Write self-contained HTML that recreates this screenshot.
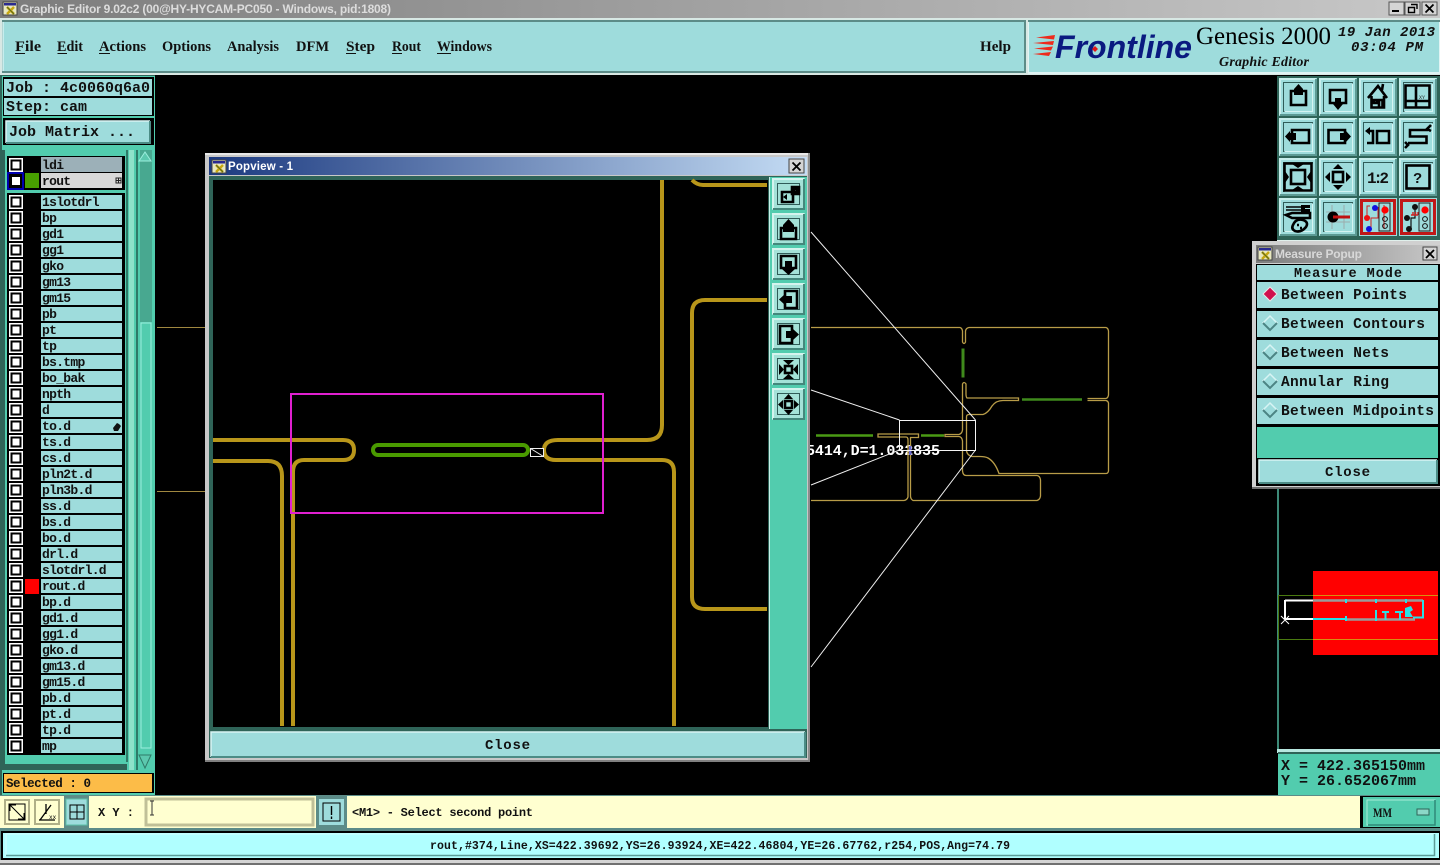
<!DOCTYPE html>
<html><head><meta charset="utf-8"><title>Graphic Editor</title>
<style>
html,body{margin:0;padding:0;background:#000;width:1440px;height:865px;overflow:hidden}
svg{display:block;position:absolute;left:0;top:0}
text{white-space:pre}
.m{font-family:"Liberation Mono",monospace;font-weight:bold;fill:#111}
.s{font-family:"Liberation Serif",serif;font-weight:bold;fill:#111}
.l{font-family:"Liberation Mono",monospace;font-weight:bold;font-size:13px;letter-spacing:-.7px;fill:#111}
.ic{fill:none;stroke:#000;stroke-width:2.6}
.k{fill:#000}
.o{fill:none;stroke:#b89c48;stroke-width:1.3}
.y{fill:none;stroke:#b8961a;stroke-width:4}
</style></head><body>
<svg width="1440" height="865" viewBox="0 0 1440 865" xmlns="http://www.w3.org/2000/svg">
<defs>
<linearGradient id="tg" x1="0" x2="1" y1="0" y2="0"><stop offset="0" stop-color="#7c7c7c"/><stop offset="1" stop-color="#c8c8c8"/></linearGradient>
<linearGradient id="bg" x1="0" x2="1" y1="0" y2="0"><stop offset="0" stop-color="#1c3a80"/><stop offset="1" stop-color="#c4dcf4"/></linearGradient>
<g id="cb"><rect x="9" y="1" width="14" height="14" fill="#fff"/><rect x="11.5" y="3.5" width="9" height="9" fill="none" stroke="#000" stroke-width="2"/></g>
<g id="r"><rect x="41" y="1" width="81" height="14" fill="#9edcdc"/><use href="#cb"/></g>
<g id="b">
<rect width="38" height="38" fill="#9edcdc"/>
<path d="M1 37V1H37" fill="none" stroke="#c8eeec" stroke-width="2"/>
<path d="M37 1V37H1" fill="none" stroke="#5c9a94" stroke-width="2"/>
<rect x="4.5" y="4.500" width="29" height="29" fill="none" stroke="#2f5c58" stroke-width="1"/>
<path d="M5.500 33.500H33.500V5.500" fill="none" stroke="#d4f4f2" stroke-width="1"/>
</g>
<g id="p">
<rect width="33" height="32" fill="#a4e2d8"/>
<path d="M1 31V1H32" fill="none" stroke="#d4f4ee" stroke-width="2"/>
<path d="M32 1V31H1" fill="none" stroke="#44887c" stroke-width="2"/>
<rect x="5.500" y="5.500" width="22" height="21" fill="none" stroke="#2f5c58" stroke-width="1"/>
</g>
<g id="opt">
<rect x="1257" y="0" width="181" height="26" fill="#9edcdc"/>
<rect x="1257" y="26" width="181" height="3" fill="#000"/>
</g>
<g id="dia"><path d="M0 -7L7 0L0 7L-7 0Z" fill="#9edcdc" stroke="#d8f4f4" stroke-width="1.5"/><path d="M-7 0L0 7L7 0" fill="none" stroke="#4c8484" stroke-width="2"/></g>
<g id="wi"><rect x="0" y="0" width="14" height="13" fill="#e8e8c0" stroke="#444" stroke-width="1"/><rect x="1" y="1" width="12" height="2.500" fill="#2a2a90"/><path d="M4 5L11 12M11 5L4 12" stroke="#c8a810" stroke-width="2.400"/><path d="M4 5L11 12" stroke="#5a6a20" stroke-width="1"/></g>
</defs>

<rect width="1440" height="865" fill="#000"/>

<!-- main canvas drawing -->
<path d="M157 327.500H205M157 491.500H205" stroke="#a08840" fill="none"/>
<text class="m" x="806" y="455" font-size="15" textLength="134" style="fill:#fff">5414,D=1.032835</text>
<path class="o" d="M811 327.500H960Q962 328 962.500 331V342Q964 345 965.500 342V331Q966 328 969 327.500H1106Q1108 328 1108.500 331V395Q1108 398 1106 398.500H1087.500M1087.500 400.500H1106Q1108 401 1108.500 403V471Q1108 473.500 1106 473.500H999Q995 462 988 458Q985 456.500 980 456.500H972Q966.500 455 966.500 450V417Q966.500 414.500 969 414.500H983Q988 413 992 406Q996 400.500 1003 400.500H1018.500V398H967Q966 397 966 394V384Q964 381 962.500 384V430Q962 433.500 959 434.500H945V436.500H959Q962 437 962.500 441V471Q963 475.500 966 475.500H1037Q1040 476 1040.500 480V496Q1040 499.500 1037 500.500H913Q910.500 499 910.500 496V437.500H918.500V434H878V437H906Q908 437 908 440V497Q907 500 904 500.500H811"/>
<rect x="909" y="446" width="2.500" height="9" fill="#6464c8"/>
<path d="M963 348.500V377.500" stroke="#3f8a1c" stroke-width="3" fill="none"/>
<path d="M1022 399.500H1082" stroke="#3f8a1c" stroke-width="2.400" fill="none"/>
<path d="M816 435.500H873M921 435.500H944" stroke="#4a9a14" stroke-width="2.400" fill="none"/>
<path d="M811 232L975.500 420M811 390L899.500 420M811 485L899.500 450M811 667L975.500 450" stroke="#f0f0f0" stroke-width="1" fill="none"/>
<rect x="899.500" y="420.500" width="76" height="30" fill="none" stroke="#f4f4f4" stroke-width="1"/>

<!-- title bar -->
<rect x="0" y="0" width="1440" height="18" fill="url(#tg)"/>
<use href="#wi" x="3" y="2"/>
<text x="20" y="13" font-family="Liberation Sans" font-weight="bold" font-size="12" fill="#dcdcdc" textLength="371">Graphic Editor 9.02c2 (00@HY-HYCAM-PC050 - Windows, pid:1808)</text>
<rect x="1389" y="2" width="15" height="13" fill="#d4d4d4" stroke="#555"/><rect x="1392" y="10" width="7" height="2" fill="#000"/>
<rect x="1405" y="2" width="15" height="13" fill="#d4d4d4" stroke="#555"/><path d="M1411 4.500H1417V9M1408.500 7.500H1414.500V12.500H1408.500Z" fill="none" stroke="#000" stroke-width="1.400"/>
<rect x="1422" y="2" width="15" height="13" fill="#d4d4d4" stroke="#555"/><path d="M1425.500 4.500L1433.500 12.500M1433.500 4.500L1425.500 12.500" stroke="#000" stroke-width="1.800"/>

<!-- menu -->
<rect x="0" y="18" width="1440" height="57" fill="#d8e8e4"/>
<rect x="2" y="20" width="1024" height="53" fill="#5c8c88"/>
<rect x="3" y="22" width="1021" height="49" fill="#9edcdc"/>
<path d="M3 22V71" stroke="#d8f4f4" stroke-width="1.400"/>
<rect x="1028" y="20" width="412" height="54" fill="#e0f4f4"/>
<rect x="1028" y="20" width="412" height="2" fill="#5c8c88"/>
<rect x="1029" y="22" width="410" height="50" fill="#9edcdc"/>
<g>
<text class="s" font-size="15" lengthAdjust="spacingAndGlyphs" x="15" y="51" textLength="26">File</text>
<text class="s" font-size="15" lengthAdjust="spacingAndGlyphs" x="57" y="51" textLength="26">Edit</text>
<text class="s" font-size="15" lengthAdjust="spacingAndGlyphs" x="99" y="51" textLength="47">Actions</text>
<text class="s" font-size="15" lengthAdjust="spacingAndGlyphs" x="162" y="51" textLength="49">Options</text>
<text class="s" font-size="15" lengthAdjust="spacingAndGlyphs" x="227" y="51" textLength="52">Analysis</text>
<text class="s" font-size="15" lengthAdjust="spacingAndGlyphs" x="296" y="51" textLength="33">DFM</text>
<text class="s" font-size="15" lengthAdjust="spacingAndGlyphs" x="346" y="51" textLength="29">Step</text>
<text class="s" font-size="15" lengthAdjust="spacingAndGlyphs" x="392" y="51" textLength="29">Rout</text>
<text class="s" font-size="15" lengthAdjust="spacingAndGlyphs" x="437" y="51" textLength="55">Windows</text>
<text class="s" font-size="15" lengthAdjust="spacingAndGlyphs" x="980" y="51" textLength="31">Help</text>
</g>
<path d="M15 53.500H25M57.500 53.500H67M99 53.500H110M346 53.500H356M392 53.500H402M437 53.500H451" stroke="#111" stroke-width="1"/>
<path d="M1055 35L1036 37.500L1054 39.500ZM1054 41L1033 43L1053 45ZM1053 46.500L1034 48.500L1051 50.500ZM1051 52L1033 54L1049 56Z" fill="#ee2a1c"/>
<text x="1055" y="58" font-family="Liberation Sans" font-weight="bold" font-style="italic" font-size="32" fill="#0a1a80" textLength="137" lengthAdjust="spacingAndGlyphs">Frontline</text>
<path d="M1095 46L1098 49L1095 52L1092 49Z" fill="#e01818"/>
<text x="1196" y="44" font-family="Liberation Serif" font-size="25" fill="#000" textLength="135" lengthAdjust="spacingAndGlyphs">Genesis 2000</text>
<text x="1219" y="66" font-family="Liberation Serif" font-weight="bold" font-style="italic" font-size="14" fill="#111" textLength="90">Graphic Editor</text>
<text x="1338" y="36" font-family="Liberation Mono" font-weight="bold" font-style="italic" font-size="14" fill="#111" textLength="97">19 Jan 2013</text>
<text x="1351" y="51" font-family="Liberation Mono" font-weight="bold" font-style="italic" font-size="14" fill="#111" textLength="72">03:04 PM</text>

<!-- left panel -->
<rect x="0" y="75" width="155" height="722" fill="#2f6458"/>
<rect x="2" y="76" width="153" height="72" fill="#52ccae"/>
<rect x="3" y="77" width="151" height="21" fill="#000"/>
<rect x="4" y="79" width="148" height="17" fill="#9edcdc"/>
<rect x="3" y="97" width="151" height="19" fill="#000"/>
<rect x="4" y="98" width="148" height="17" fill="#9edcdc"/>
<rect x="3" y="118" width="151" height="27" fill="#000"/>
<rect x="6" y="121" width="144" height="22" fill="#9edcdc"/>
<path d="M6 143V121H150" fill="none" stroke="#d8f4f4" stroke-width="1.500"/>
<path d="M150 121V143H6" fill="none" stroke="#4c8c86" stroke-width="2"/>
<text class="m" x="6" y="92" font-size="15" textLength="144">Job : 4c0060q6a0</text>
<text class="m" x="6" y="111" font-size="15" textLength="81">Step: cam</text>
<text class="m" x="9" y="136" font-size="15" textLength="126">Job Matrix ...</text>

<rect x="2" y="148" width="153" height="624" fill="#52ccae"/>
<rect x="0" y="150" width="5" height="620" fill="#2f6458"/>
<rect x="5" y="150" width="122" height="608" fill="#52ccae"/>
<rect x="5" y="756" width="122" height="8" fill="#52ccae"/>
<rect x="5" y="764" width="122" height="6" fill="#2f6458"/>
<rect x="126" y="150" width="2" height="612" fill="#2f7a68"/>
<rect x="129" y="150" width="5" height="620" fill="#8ee2ca"/>
<rect x="136" y="150" width="2" height="620" fill="#2f7a68"/>
<rect x="139" y="150" width="14" height="622" fill="#52ccae"/>
<rect x="140" y="150" width="12" height="172" fill="#48a890"/>
<rect x="141" y="323" width="10" height="425" fill="#52ccae" stroke="#9ceedd"/>
<path d="M145 152L151 161H139Z" fill="#5cc8ae" stroke="#9ceedd"/>
<path d="M145 768L139 755H151Z" fill="#5cc8ae" stroke="#2f7a68"/>
<rect x="7" y="156" width="118" height="34" fill="#000"/>
<rect x="7" y="193" width="118" height="562" fill="#000"/>
<rect x="41" y="157" width="81" height="15" fill="#9cb0b8"/>
<rect x="41" y="173" width="81" height="15" fill="#d8d8d8"/>
<use href="#cb" y="157"/>
<rect x="8" y="173" width="15" height="16" fill="#000" stroke="#0000b0" stroke-width="2"/><rect x="12" y="177" width="8" height="8" fill="#fff"/>
<rect x="25" y="173" width="14" height="15" fill="#48a000"/>
<rect x="116" y="178" width="5" height="5" fill="none" stroke="#222"/><path d="M118.500 178V183M116 180.500H121" stroke="#222"/>
<text class="l" x="42" y="169">ldi</text>
<text class="l" x="42" y="185">rout</text>

<use href="#r" y="194"/><use href="#r" y="210"/><use href="#r" y="226"/><use href="#r" y="242"/><use href="#r" y="258"/><use href="#r" y="274"/><use href="#r" y="290"/><use href="#r" y="306"/><use href="#r" y="322"/><use href="#r" y="338"/><use href="#r" y="354"/><use href="#r" y="370"/><use href="#r" y="386"/><use href="#r" y="402"/><use href="#r" y="418"/><use href="#r" y="434"/><use href="#r" y="450"/><use href="#r" y="466"/><use href="#r" y="482"/><use href="#r" y="498"/><use href="#r" y="514"/><use href="#r" y="530"/><use href="#r" y="546"/><use href="#r" y="562"/><use href="#r" y="578"/><use href="#r" y="594"/><use href="#r" y="610"/><use href="#r" y="626"/><use href="#r" y="642"/><use href="#r" y="658"/><use href="#r" y="674"/><use href="#r" y="690"/><use href="#r" y="706"/><use href="#r" y="722"/><use href="#r" y="738"/>
<rect x="25" y="579" width="14" height="15" fill="#f00"/>
<path d="M113 428L117 423L119 424L121 426L118 431H114Z" fill="#111"/>
<g>
<text class="l" x="42" y="206">1slotdrl</text><text class="l" x="42" y="222">bp</text><text class="l" x="42" y="238">gd1</text><text class="l" x="42" y="254">gg1</text><text class="l" x="42" y="270">gko</text><text class="l" x="42" y="286">gm13</text><text class="l" x="42" y="302">gm15</text><text class="l" x="42" y="318">pb</text><text class="l" x="42" y="334">pt</text><text class="l" x="42" y="350">tp</text><text class="l" x="42" y="366">bs.tmp</text><text class="l" x="42" y="382">bo_bak</text><text class="l" x="42" y="398">npth</text><text class="l" x="42" y="414">d</text><text class="l" x="42" y="430">to.d</text><text class="l" x="42" y="446">ts.d</text><text class="l" x="42" y="462">cs.d</text><text class="l" x="42" y="478">pln2t.d</text><text class="l" x="42" y="494">pln3b.d</text><text class="l" x="42" y="510">ss.d</text><text class="l" x="42" y="526">bs.d</text><text class="l" x="42" y="542">bo.d</text><text class="l" x="42" y="558">drl.d</text><text class="l" x="42" y="574">slotdrl.d</text><text class="l" x="42" y="590">rout.d</text><text class="l" x="42" y="606">bp.d</text><text class="l" x="42" y="622">gd1.d</text><text class="l" x="42" y="638">gg1.d</text><text class="l" x="42" y="654">gko.d</text><text class="l" x="42" y="670">gm13.d</text><text class="l" x="42" y="686">gm15.d</text><text class="l" x="42" y="702">pb.d</text><text class="l" x="42" y="718">pt.d</text><text class="l" x="42" y="734">tp.d</text><text class="l" x="42" y="750">mp</text>
</g>
<rect x="2" y="771" width="153" height="25" fill="#52ccae"/>
<rect x="3" y="773" width="151" height="20" fill="#000"/>
<rect x="4" y="774" width="148" height="18" fill="#fcbc48"/>
<text class="m" x="6" y="787" font-size="12.500" textLength="85">Selected : 0</text>

<!-- right frame -->
<rect x="1277" y="76" width="163" height="166" fill="#2f6458"/>
<rect x="1277" y="240" width="163" height="4" fill="#e0f0ec"/>
<rect x="1277" y="489" width="2" height="262" fill="#3d8a78"/>

<!-- tool grid -->
<g id="tools">
<g transform="translate(1279,78)"><use href="#b"/><path class="ic" d="M12 13H27V27H12Z" stroke-width="3"/><path class="k" d="M19.500 6L24 11V17H15V11Z"/></g>
<g transform="translate(1319,78)"><use href="#b"/><path class="ic" d="M11 12H27V25H11Z" stroke-width="3"/><path class="k" d="M16 20H22V26L24 26L19 32L14 26H16Z"/></g>
<g transform="translate(1359,78)"><use href="#b"/><path class="ic" d="M9 20L19 8L28 20M12.500 18V29.500H25V18M15 22H18V25H15ZM20 22H23.500V29.500H20ZM24 6L23 12" stroke-width="1.400"/></g>
<g transform="translate(1399,78)"><use href="#b"/><path class="ic" d="M6.500 7.500H30.500V29.500H6.500Z" stroke-width="3"/><path class="ic" d="M6.500 23H30.500M17 7.500V29.500" stroke-width="1.400"/><text x="20" y="21" font-family="Liberation Mono" font-size="5" fill="#222">XY</text></g>
<g transform="translate(1279,118)"><use href="#b"/><path class="ic" d="M13 12H30V25H13Z" stroke-width="3"/><path class="k" d="M6 18.500L11 13V15H17V22H11V24Z"/></g>
<g transform="translate(1319,118)"><use href="#b"/><path class="ic" d="M9.500 12H26V25H9.500Z" stroke-width="3"/><path class="k" d="M32 18.500L27 13V15H21V22H27V24Z"/></g>
<g transform="translate(1359,118)"><use href="#b"/><path class="ic" d="M18 13H30V25H18Z" stroke-width="2.600"/><path class="ic" d="M9 13H14V25H8" stroke-width="3"/><path class="k" d="M6 13L11 9V17Z"/></g>
<g transform="translate(1399,118)"><use href="#b"/><path class="ic" d="M29 12H11V18.500H27.500V25H9" stroke-width="3"/><path class="ic" d="M32 7L28 11L32 13M6 24L9 27L6 30" stroke-width="1"/></g>
<g transform="translate(1279,158)"><use href="#b"/><path class="ic" d="M5.500 5.500H32.500V32.500H5.500Z" stroke-width="1"/><rect x="12" y="12" width="14" height="14" class="ic" stroke-width="2.600"/><path class="k" d="M13 6H25L19 10ZM13 32H25L19 28ZM6 13V25L10 19ZM32 13V25L28 19Z"/></g>
<g transform="translate(1319,158)"><use href="#b"/><rect x="14" y="14" width="10" height="10" class="ic" stroke-width="2"/><path class="k" d="M19 6L24 11H14ZM19 32L24 27H14ZM6 19L11 14V24ZM32 19L27 14V24Z"/></g>
<g transform="translate(1359,158)"><use href="#b"/><text x="8" y="25" font-family="Liberation Mono" font-weight="bold" font-size="16" fill="#111" textLength="22">1:2</text></g>
<g transform="translate(1399,158)"><use href="#b"/><rect x="7.500" y="7.500" width="23" height="23" class="ic" stroke-width="2.800"/><text x="14" y="25" font-family="Liberation Sans" font-weight="bold" font-size="15" fill="#111">?</text></g>
<g transform="translate(1279,198)"><use href="#b"/><path d="M7 9H22M7 12H22" stroke="#000" stroke-width="1.600"/><path class="k" d="M22 7H31V10H26V11H31V14H22Z"/><path class="ic" stroke-width="1" d="M7 17L13 15H31V20H13Z"/><path class="ic" stroke-width="1.200" d="M14 27Q17 20 24 22Q30 24 27 29Q22 35 16 33Q12 31 14 27ZM18 27H20M21 30H23"/></g>
<g transform="translate(1319,198)"><use href="#b"/><path d="M7 14H31M7 24H31M13 7V31M25 7V31" stroke="#9cacac" stroke-width="1"/><circle cx="14" cy="19" r="5.500" fill="#000"/><path d="M14 19H31" stroke="#c01010" stroke-width="3"/></g>
<g transform="translate(1359,198)"><rect width="38" height="38" fill="#9edcdc"/><rect x="2.500" y="2.500" width="33" height="33" fill="none" stroke="#c01818" stroke-width="3"/><path d="M8 19V8H11M19 9V20H12V31M8 19H11M25 7V31" fill="none" stroke="#d02020" stroke-width="1"/><circle cx="16" cy="10" r="3" fill="#1010e0"/><circle cx="8" cy="20" r="3" fill="#f01010"/><circle cx="10" cy="31" r="3" fill="#1010e0"/><rect x="20" y="5" width="11" height="28" fill="none" stroke="#222" stroke-width="1"/><circle cx="26" cy="12" r="3.600" fill="#f00"/><circle cx="26" cy="21" r="2.400" fill="none" stroke="#111"/><circle cx="26" cy="28" r="2.400" fill="none" stroke="#111"/></g>
<g transform="translate(1399,198)"><rect width="38" height="38" fill="#9edcdc"/><rect x="2.500" y="2.500" width="33" height="33" fill="none" stroke="#c01818" stroke-width="3"/><path d="M16 9V20H12V31" fill="none" stroke="#111" stroke-width="1.200"/><path d="M12 17H19M14 14V17M16.500 14V17M19 14V17" stroke="#d02020" stroke-width="1.400"/><circle cx="16" cy="9" r="3" fill="#111"/><circle cx="8" cy="20" r="3" fill="#111"/><circle cx="10" cy="31" r="3" fill="#111"/><rect x="20" y="5" width="11" height="28" fill="none" stroke="#222" stroke-width="1"/><circle cx="26" cy="12" r="3.600" fill="#f00"/><circle cx="26" cy="21" r="2.400" fill="none" stroke="#111"/><circle cx="26" cy="28" r="2.400" fill="none" stroke="#111"/></g>
</g>

<!-- minimap -->
<rect x="1313" y="571" width="125" height="84" fill="#f00"/>
<path d="M1278.500 595.500H1313M1278.500 639.500H1313M1278.500 595V640" stroke="#4a7a10" fill="none"/>
<path d="M1313 595.500H1438M1313 639.500H1438" stroke="#d89010"/>
<path d="M1313 600.500H1423M1346 619.500H1376M1376 619.500H1415" fill="none" stroke="#9a9a9a" stroke-width="2.400"/>
<path d="M1285 600.500H1313M1285 600V619M1285 619H1313" fill="none" stroke="#fff" stroke-width="2"/>
<path d="M1281 616L1289 624M1289 616L1281 624" stroke="#fff" stroke-width="1"/>
<path d="M1313 619H1346M1346 599V603M1376 599V603M1406 599V603M1346 616V621M1376 610V621M1423 600V617.500H1413M1382 612H1389M1385.500 612V620M1395 612H1403M1400 612V620" fill="none" stroke="#28e0e8" stroke-width="2"/>
<path d="M1405 608L1411 606L1413 610L1410 612L1413 617L1405 617Z" fill="#28e0e8"/>

<!-- coords -->
<rect x="1277" y="749" width="163" height="4" fill="#b8e8e0"/>
<rect x="1278" y="752" width="162" height="44" fill="#52ccae"/>
<rect x="1278" y="752" width="162" height="2" fill="#2f6458"/>
<text class="m" x="1281" y="770" font-size="15" textLength="144">X = 422.365150mm</text>
<text class="m" x="1281" y="785" font-size="15" textLength="135">Y = 26.652067mm</text>

<!-- measure popup -->
<rect x="1252" y="241" width="188" height="248" fill="#d0d0d0"/>
<rect x="1252" y="487" width="188" height="2" fill="#707070"/>
<rect x="1256" y="245" width="184" height="18" fill="url(#tg)"/>
<use href="#wi" x="1258" y="247"/>
<text x="1275" y="258" font-family="Liberation Sans" font-weight="bold" font-size="12" fill="#d8d8d8" textLength="87">Measure Popup</text>
<rect x="1423" y="247" width="14" height="13" fill="#d4d4d4" stroke="#444"/><path d="M1426 250L1434 258M1434 250L1426 258" stroke="#000" stroke-width="1.800"/>
<rect x="1256" y="264" width="184" height="222" fill="#000"/>
<rect x="1257" y="265" width="181" height="15" fill="#9edcdc"/>
<text class="m" x="1294" y="277" font-size="13.500" textLength="108">Measure Mode</text>
<use href="#opt" y="282"/><use href="#opt" y="311"/><use href="#opt" y="340"/><use href="#opt" y="369"/><use href="#opt" y="398"/>
<rect x="1257" y="427" width="181" height="31" fill="#52ccae"/>
<rect x="1257" y="458" width="181" height="1" fill="#000"/>
<rect x="1259" y="460" width="178" height="23" fill="#9edcdc"/>
<path d="M1259 483V460H1437" fill="none" stroke="#d8f4f4" stroke-width="1.500"/>
<path d="M1437 460V483H1259" fill="none" stroke="#4c8c86" stroke-width="2"/>
<path d="M1270 287L1277 294L1270 301L1263 294Z" fill="#d0104c" stroke="#e8e8e8"/>
<use href="#dia" x="1270" y="323"/><use href="#dia" x="1270" y="352"/><use href="#dia" x="1270" y="381"/><use href="#dia" x="1270" y="410"/>
<text class="m" x="1281" y="299" font-size="14.500" textLength="126">Between Points</text>
<text class="m" x="1281" y="328" font-size="14.500" textLength="144">Between Contours</text>
<text class="m" x="1281" y="357" font-size="14.500" textLength="108">Between Nets</text>
<text class="m" x="1281" y="386" font-size="14.500" textLength="108">Annular Ring</text>
<text class="m" x="1281" y="415" font-size="14.500" textLength="153">Between Midpoints</text>
<text class="m" x="1325" y="476" font-size="14" textLength="45">Close</text>

<!-- popview -->
<rect x="205" y="153" width="605" height="609" fill="#c8c8c8"/>
<rect x="205" y="153" width="605" height="2" fill="#e8e8e8"/>
<rect x="808" y="153" width="2" height="609" fill="#8c8c8c"/>
<rect x="205" y="760" width="605" height="2" fill="#808080"/>
<rect x="209" y="157" width="598" height="18" fill="url(#bg)"/>
<use href="#wi" x="212" y="160"/>
<text x="228" y="170" font-family="Liberation Sans" font-weight="bold" font-size="11.500" fill="#fff" textLength="65">Popview - 1</text>
<rect x="789" y="159" width="15" height="14" fill="#d4d4d4" stroke="#444"/><path d="M792.500 162.500L800.500 170.500M800.500 162.500L792.500 170.500" stroke="#000" stroke-width="1.800"/>
<rect x="209" y="176" width="598" height="582" fill="#2f6458"/>
<rect x="213" y="180" width="555" height="547" fill="#000"/>
<rect x="769" y="177" width="38" height="552" fill="#52ccae"/>
<path d="M769.500 177V729" stroke="#c8f0e8"/>
<rect x="209" y="729" width="598" height="29" fill="#2f6458"/>
<rect x="211" y="732" width="594" height="25" fill="#9edcdc"/>
<path d="M211 757V732H805" fill="none" stroke="#d8f4f4" stroke-width="1.500"/>
<path d="M805 732V757H211" fill="none" stroke="#4c8c86" stroke-width="2"/>
<text class="m" x="485" y="749" font-size="14" textLength="45">Close</text>
<g transform="translate(772,178)"><use href="#p"/><path class="ic" d="M10 14H21V24H10Z" stroke-width="2.400"/><path class="k" d="M11 19L15 16V22Z"/><path class="ic" d="M20 9H27V16H20Z" stroke-width="1.200"/><path class="ic" stroke-width="1" d="M22 11H25V14H22Z"/></g>
<g transform="translate(772,213)"><use href="#p"/><path class="ic" d="M9 15H24V26H9Z" stroke-width="2.600"/><path class="k" d="M16.500 6L22 12V19H11V12Z"/></g>
<g transform="translate(772,248)"><use href="#p"/><path class="ic" d="M9 8H24V20H9Z" stroke-width="2.600"/><path class="k" d="M13 13H20V21H23L16.500 27L10 21H13Z"/></g>
<g transform="translate(772,283)"><use href="#p"/><path class="ic" d="M13 8H25V25H13Z" stroke-width="2.600"/><path class="k" d="M7 16.500L13 11V13H20V20H13V22Z"/></g>
<g transform="translate(772,318)"><use href="#p"/><path class="ic" d="M8 8H20V25H8Z" stroke-width="2.600"/><path class="k" d="M27 16.500L21 11V13H14V20H21V22Z"/></g>
<g transform="translate(772,353)"><use href="#p"/><rect x="13" y="13" width="7" height="7" class="ic" stroke-width="2"/><path class="k" d="M11 7H22L16.500 12ZM11 26H22L16.500 21ZM7 11V22L12 16.500ZM26 11V22L21 16.500Z"/></g>
<g transform="translate(772,388)"><use href="#p"/><rect x="13" y="13" width="7" height="7" class="ic" stroke-width="1.500"/><path class="k" d="M16.500 6L21 11H12ZM16.500 27L21 22H12ZM6 16.500L11 12V21ZM27 16.500L22 12V21Z"/></g>

<!-- popview canvas -->
<path class="y" d="M692 180Q697 185 703 185H767"/>
<path class="y" d="M662 180V425Q662 440 647 440H558Q544 440 544 450Q544 460 556 460H662Q674 460 674 472V726"/>
<path class="y" d="M213 440H343Q354 440 354 450Q354 460 343 460H304Q293 460 293 472V726"/>
<path class="y" d="M213 461H268Q282 461 282 476V726"/>
<path class="y" d="M767 300H705Q692 300 692 313V597Q692 609 705 609H767"/>
<rect x="373" y="445" width="155" height="10" rx="5" fill="none" stroke="#4a9a00" stroke-width="4"/>
<rect x="530.500" y="448.500" width="13" height="8" fill="#000" stroke="#f0f0f0"/>
<path d="M530.500 448.500L543.500 456.500" stroke="#f0f0f0"/>
<rect x="291" y="394" width="312" height="119" fill="none" stroke="#e020d0" stroke-width="2"/>

<!-- bottom bar -->
<rect x="0" y="795" width="1440" height="70" fill="#5c8c88"/>
<rect x="0" y="796" width="1362" height="32" fill="#ffffd0"/>
<g fill="none">
<rect x="5" y="800" width="24" height="24" stroke="#b0b088" stroke-width="2"/><rect x="9" y="804" width="16" height="16" stroke="#000"/><path d="M10 805L24 819M24 813V819H18M10 811V805H16" stroke="#000"/>
<rect x="35" y="800" width="24" height="24" stroke="#b0b088" stroke-width="2"/><path d="M39 820H55M40 820L51 805M46 804V814" stroke="#000" stroke-width="1.300"/><text x="49" y="819" font-size="6" fill="#000" font-family="Liberation Mono">xx</text>
<rect x="64" y="796" width="25" height="32" fill="#5c8c88"/><rect x="66" y="799" width="21" height="26" fill="#9edcdc" stroke="#5cc0a8"/><rect x="73" y="805" width="14" height="14" stroke="#000" transform="translate(-3,0)"/><path d="M70 812H84M77 805V819" stroke="#000"/>
</g>
<text class="m" x="98" y="816" font-size="12" textLength="36">X Y :</text>
<rect x="146" y="799" width="167" height="26" fill="#ffffd0" stroke="#c0c098" stroke-width="3"/>
<path d="M150 801H154M152 801V815M150 815H154" stroke="#333"/>
<rect x="316" y="796" width="31" height="32" fill="#5c8c88"/><rect x="319" y="799" width="25" height="26" fill="#9edcdc"/><rect x="323" y="803" width="17" height="18" fill="none" stroke="#000"/><path d="M331.500 806V815M331.500 816.500V819" stroke="#000" stroke-width="1.400"/>
<text class="m" x="352" y="816" font-size="12" textLength="181">&lt;M1&gt; - Select second point</text>
<rect x="1360" y="796" width="80" height="32" fill="#000"/>
<rect x="1363" y="797" width="77" height="30" fill="#52ccae"/>
<rect x="1367" y="800" width="68" height="25" fill="#52ccae" stroke="#a8ecd8"/>
<path d="M1368 825H1435V800" fill="none" stroke="#2f8a78" stroke-width="1.500"/>
<text class="s" x="1373" y="817" font-size="13" textLength="19" lengthAdjust="spacingAndGlyphs">MM</text>
<rect x="1417" y="809" width="12" height="6" fill="#8cd8c8" stroke="#2f6458"/>
<rect x="0" y="829" width="1440" height="2" fill="#5c8c88"/>
<rect x="1" y="831" width="1439" height="29" fill="#000"/>
<rect x="3" y="833" width="1436" height="25" fill="#b0ffff"/>
<path d="M6 856V834H1435" fill="none" stroke="#d4ffff"/>
<path d="M1434.500 834V855.500H6" fill="none" stroke="#5c9c98" stroke-width="1.500"/>
<text class="m" x="430" y="849" font-size="11.500" textLength="580">rout,#374,Line,XS=422.39692,YS=26.93924,XE=422.46804,YE=26.67762,r254,POS,Ang=74.79</text>
<rect x="0" y="860" width="1440" height="5" fill="#d4d4d4"/>
<rect x="0" y="863" width="1440" height="2" fill="#707070"/>
</svg>
</body></html>
